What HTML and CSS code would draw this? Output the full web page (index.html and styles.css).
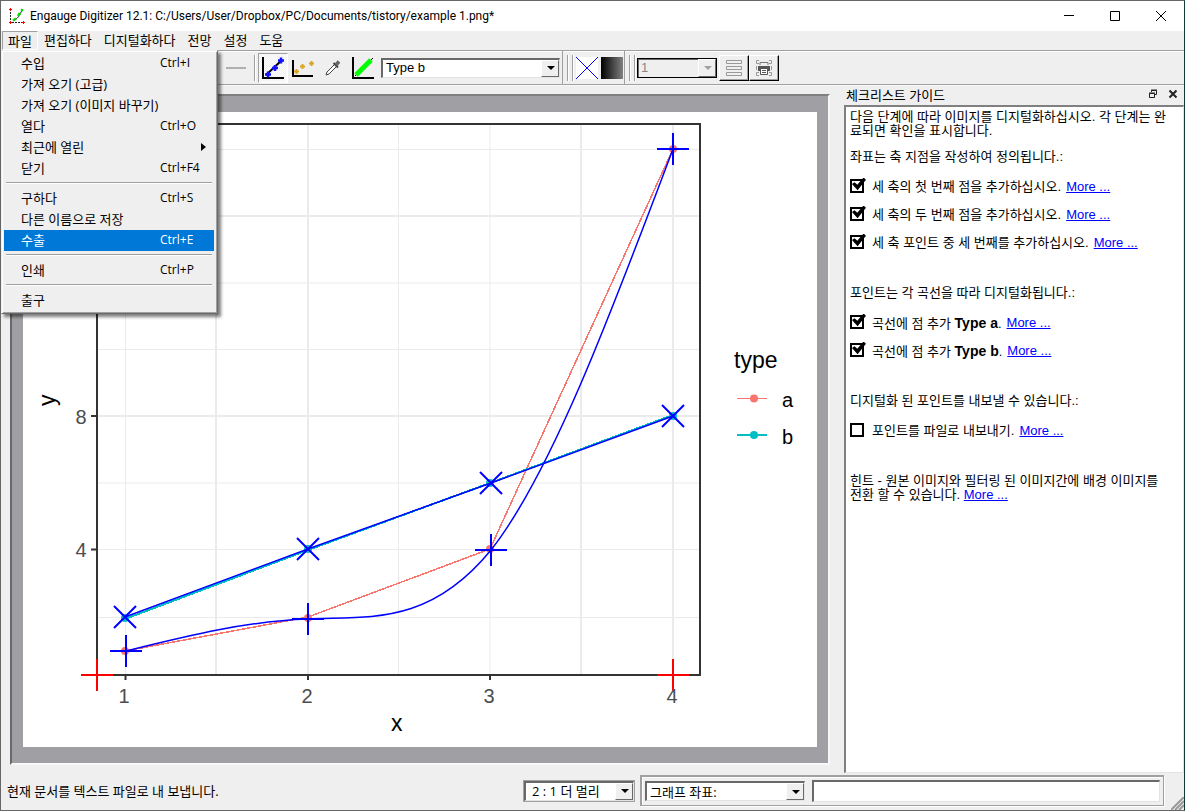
FILE: index.html
```html
<!DOCTYPE html>
<html lang="ko">
<head>
    <meta charset="UTF-8">
    <meta name="viewport" content="width=device-width, initial-scale=1.0">
    <title>Engauge Digitizer 12.1</title>
    <link rel="stylesheet" href="styles.css">
</head>
<body>
    <div class="window">
        <!-- Title bar -->
        <header class="titlebar">
            <svg class="app-icon" width="16" height="16" viewBox="0 0 16 16">
                <path d="M1.5 1v13.5H15" fill="none" stroke="#222" stroke-dasharray="2 1"/>
                <path d="M4 12.5C9 11 10 8 13.5 1.500" fill="none" stroke="#222"/>
                <path d="M4 12.500l3-2M9 8l2-3M12.500 3l1-2" fill="none" stroke="#00e000" stroke-width="2.500"/>
                <path d="M0 1.500h3M1.500 0v3M0 14.500h3M1.500 13v3M13 14.500h3M14.500 13v3" stroke="#f00"/>
            </svg>
            <h1>Engauge Digitizer 12.1: C:/Users/User/Dropbox/PC/Documents/tistory/example 1.png*</h1>
            <div class="win-buttons">
                <button type="button" aria-label="Minimize"><svg width="12" height="12"><path d="M1 5.500h10"/></svg></button>
                <button type="button" aria-label="Maximize"><svg width="12" height="12"><path d="M1.500 1.500h9v9h-9z"/></svg></button>
                <button type="button" aria-label="Close"><svg width="12" height="12"><path d="M1 1l10 10M11 1L1 11"/></svg></button>
            </div>
        </header>

        <!-- Menu bar -->
        <nav class="menubar">
            <div class="menu-root">
                <button type="button" class="menu-title open">파일</button>
                <ul class="menu">
                    <li><button type="button">수입<kbd>Ctrl+I</kbd></button></li>
                    <li><button type="button">가져 오기 (고급)</button></li>
                    <li><button type="button">가져 오기 (이미지 바꾸기)</button></li>
                    <li><button type="button">열다<kbd>Ctrl+O</kbd></button></li>
                    <li><button type="button" class="has-sub">최근에 열린</button></li>
                    <li><button type="button">닫기<kbd>Ctrl+F4</kbd></button></li>
                    <li class="sep"></li>
                    <li><button type="button">구하다<kbd>Ctrl+S</kbd></button></li>
                    <li><button type="button">다른 이름으로 저장</button></li>
                    <li><button type="button" class="active">수출<kbd>Ctrl+E</kbd></button></li>
                    <li class="sep"></li>
                    <li><button type="button">인쇄<kbd>Ctrl+P</kbd></button></li>
                    <li class="sep"></li>
                    <li><button type="button">출구</button></li>
                </ul>
            </div>
            <button type="button" class="menu-title">편집하다</button>
            <button type="button" class="menu-title">디지털화하다</button>
            <button type="button" class="menu-title">전망</button>
            <button type="button" class="menu-title">설정</button>
            <button type="button" class="menu-title">도움</button>
        </nav>

        <!-- Toolbars -->
        <div class="toolbars">
            <div class="toolbar main">
                <button type="button" class="tool" aria-label="Segment fill">
                    <svg width="24" height="24"><path d="M2 12h20" stroke="#b0b0b0" stroke-width="2"/></svg>
                </button>
                <span class="divider"></span>
                <button type="button" class="tool checked" aria-label="Curve points">
                    <svg width="24" height="24">
                        <path d="M2 1v21h21" fill="none" stroke="#000" stroke-width="2"/>
                        <path d="M5 19L21 4" stroke="#000" stroke-width="2"/>
                        <path d="M4 18.500h6M7 15.500v6M11 12h6M14 9v6M17 4.500h6M20 1.500v6" stroke="#11f" stroke-width="2.500"/>
                    </svg>
                </button>
                <button type="button" class="tool" aria-label="Point match">
                    <svg width="24" height="24">
                        <path d="M2 4v16h20" fill="none" stroke="#000" stroke-width="2"/>
                        <path d="M3 15.500h5M5.500 13v5M9 10.500h5M11.500 8v5M18 7.500h5M20.500 5v5" stroke="#daa520" stroke-width="2"/>
                    </svg>
                </button>
                <button type="button" class="tool" aria-label="Color picker">
                    <svg width="24" height="24">
                        <path d="M5 19l1-3 8-8 2 2-8 8z" fill="#fff" stroke="#444"/>
                        <path d="M12.500 7l4.500 4.500" stroke="#444" stroke-width="2"/>
                        <path d="M15 9l3-3.500" stroke="#666" stroke-width="3.500"/>
                    </svg>
                </button>
                <button type="button" class="tool" aria-label="Curve fill">
                    <svg width="24" height="24">
                        <path d="M2 1v21h21" fill="none" stroke="#000" stroke-width="2"/>
                        <path d="M4 20L22 2" stroke="#000"/>
                        <path d="M5 19L20 4" stroke="#0f0" stroke-width="5"/>
                    </svg>
                </button>
                <div class="combo curve">
                    <select aria-label="Curve"><option>Type a</option><option selected>Type b</option></select>
                </div>
            </div>
            <div class="toolbar views">
                <span class="handle"></span>
                <button type="button" class="tool small" aria-label="Background">
                    <svg width="22" height="22"><path d="M0 0h22v22H0z" fill="#fff"/><path d="M0 0l22 22M22 0L0 22" stroke="#00f"/></svg>
                </button>
                <button type="button" class="tool small gradient" aria-label="Filter"></button>
            </div>
            <div class="toolbar last">
                <span class="handle"></span>
                <div class="combo pages disabled">
                    <select aria-label="Page" disabled><option>1</option></select>
                </div>
                <button type="button" class="tool raised" aria-label="Rows">
                    <svg width="18" height="18"><path d="M1.500 1.500h15v3h-15zM1.500 7.500h15v3h-15zM1.500 13.500h15v3h-15z" fill="none" stroke="#999"/></svg>
                </button>
                <button type="button" class="tool raised" aria-label="Print rows">
                    <svg width="18" height="18">
                        <path d="M4 1.500H1.500v3H4M14 1.500h2.500v3H14M1.500 7v4M16.500 7v4M4 13.500H1.500v3H4M14 13.500h2.500v3H14" fill="none" stroke="#999"/>
                        <path d="M5 6V3.500h8V6" fill="#efefef" stroke="#777"/>
                        <path d="M3 7h12v5H3z" fill="#555"/>
                        <path d="M5.500 9.500h7v6h-7z" fill="#fff" stroke="#555"/>
                        <path d="M7 11.500h4M7 13.500h4" stroke="#555"/>
                    </svg>
                </button>
            </div>
        </div>

        <main class="workspace">
            <!-- Document with the digitized chart -->
            <section class="canvas">
                <svg class="chart" width="794" height="635" viewBox="23 112 794 635">
                    <g stroke="#ebebeb">
                        <path d="M125.500 124v551M398.500 124v551M490 124v551M97 149.500h603M97 283h603M97 349.500h603M97 483h603M97 549.500h603M97 617.500h603"/>
                        <path d="M216 124v551M308 124v551M581 124v551M673 124v551M97 216h603M97 416h603" stroke-width="2"/>
                    </g>
                    <path d="M97 124h603v551H97z" fill="none" stroke="#333" stroke-width="2"/>
                    <path d="M125.500 675v5M308 675v5M490 675v5M673 675v5M91 416h6M91 549.500h6" stroke="#333" stroke-width="2"/>

                    <g shape-rendering="crispEdges">
                        <path d="M125 651L308 617 490 549 673 149" fill="none" stroke="#f8766d" stroke-width="1.500"/>
                        <path d="M125 619L308 550 490 483 673 415" fill="none" stroke="#00bfc4" stroke-width="2"/>
                    </g>
                    <g fill="#f8766d">
                        <circle cx="125" cy="651" r="4"/><circle cx="308" cy="618" r="4"/>
                        <circle cx="490" cy="549" r="4"/><circle cx="673" cy="149" r="4"/>
                    </g>
                    <g fill="#00bfc4">
                        <circle cx="125" cy="618" r="4"/><circle cx="308" cy="549" r="4"/>
                        <circle cx="490" cy="483" r="4"/><circle cx="673" cy="416" r="4"/>
                    </g>

                    <g fill="none" stroke="#00f" stroke-width="1.500">
                        <path d="M126 651C187 636 247 621 308 619C369 616 429 626 491 550C551 474 612 311 673 149"/>
                        <path d="M125 617L308 549 491 483 673 416"/>
                    </g>
                    <g stroke="#00f" stroke-width="2">
                        <path d="M110 651h32M126 635v32M292 619h32M308 603v32M475 550h32M491 534v32M657 149h32M673 133v32"/>
                        <path d="M114 606l22 22M136 606l-22 22M297 538l22 22M319 538l-22 22M480 472l22 22M502 472l-22 22M662 405l22 22M684 405l-22 22"/>
                    </g>
                    <path d="M81 675h32M97 659v32M657 675h32M673 659v32" stroke="#f00" stroke-width="2"/>

                    <g class="ticks">
                        <text x="124" y="703">1</text>
                        <text x="307" y="703">2</text>
                        <text x="489" y="703">3</text>
                        <text x="672" y="703">4</text>
                        <text x="81" y="424">8</text>
                        <text x="81" y="557">4</text>
                    </g>
                    <g class="titles">
                        <text x="391" y="731">x</text>
                        <text transform="translate(55 406) rotate(-90)">y</text>
                        <text x="734" y="368">type</text>
                    </g>
                    <path d="M737 398.500h30" stroke="#f8766d"/>
                    <circle cx="754" cy="398.500" r="4" fill="#f8766d"/>
                    <path d="M737 435h30" stroke="#00bfc4" stroke-width="2"/>
                    <circle cx="754" cy="435" r="4" fill="#00bfc4"/>
                    <text class="legend" x="782" y="407">a</text>
                    <text class="legend" x="782" y="444">b</text>
                </svg>
            </section>

            <!-- Checklist guide -->
            <aside class="dock">
                <div class="dock-title">
                    <h2>체크리스트 가이드</h2>
                    <button type="button" aria-label="Float"><svg width="10" height="10"><path d="M3.500 3V1.500h5v4H7M3 1h6M1.500 4.500h5v4h-5zM1 4h6"/></svg></button>
                    <button type="button" aria-label="Close guide"><svg width="10" height="10"><path d="M1.500 1.500l7 7M8.500 1.500l-7 7" stroke-width="2"/></svg></button>
                </div>
                <div class="guide">
                    <p>다음 단계에 따라 이미지를 디지털화하십시오. 각 단계는 완료되면 확인을 표시합니다.</p>
                    <p>좌표는 축 지점을 작성하여 정의됩니다.:</p>
                    <ul>
                        <li><input type="checkbox" id="axis1" checked><label for="axis1">세 축의 첫 번째 점을 추가하십시오.</label><a href="#">More ...</a></li>
                        <li><input type="checkbox" id="axis2" checked><label for="axis2">세 축의 두 번째 점을 추가하십시오.</label><a href="#">More ...</a></li>
                        <li><input type="checkbox" id="axis3" checked><label for="axis3">세 축 포인트 중 세 번째를 추가하십시오.</label><a href="#">More ...</a></li>
                    </ul>
                    <p>포인트는 각 곡선을 따라 디지털화됩니다.:</p>
                    <ul>
                        <li><input type="checkbox" id="typeA" checked><label for="typeA">곡선에 점 추가 <b>Type a</b>.</label><a href="#">More ...</a></li>
                        <li><input type="checkbox" id="typeB" checked><label for="typeB">곡선에 점 추가 <b>Type b</b>.</label><a href="#">More ...</a></li>
                    </ul>
                    <p>디지털화 된 포인트를 내보낼 수 있습니다.:</p>
                    <ul>
                        <li><input type="checkbox" id="export"><label for="export">포인트를 파일로 내보내기.</label><a href="#">More ...</a></li>
                    </ul>
                    <p>힌트 - 원본 이미지와 필터링 된 이미지간에 배경 이미지를 전환 할 수 있습니다. <a href="#">More ...</a></p>
                </div>
            </aside>
        </main>

        <!-- Status bar -->
        <footer class="statusbar">
            <span class="message">현재 문서를 텍스트 파일로 내 보냅니다.</span>
            <div class="combo zoom">
                <select aria-label="Zoom"><option>2 : 1 더 멀리</option></select>
            </div>
            <div class="coords">
                <div class="combo units">
                    <select aria-label="Coordinates"><option>그래프 좌표:</option></select>
                </div>
                <input type="text" aria-label="Coordinate value">
            </div>
            <svg class="grip" width="13" height="13"><path d="M0 13L13 0M4 13l9-9M8 13l5-5" stroke="#999" stroke-width="2"/></svg>
        </footer>
    </div>
</body>
</html>
```
FILE: styles.css
```css
* {
    box-sizing: border-box;
}
body {
    margin: 0;
    font-family: "Open Sans", "Noto Sans CJK KR", sans-serif;
    font-size: 13px;
    color: #000;
}
button, select, input {
    font: inherit;
    color: inherit;
    margin: 0;
}
button {
    padding: 0;
    border: none;
    background: none;
}
ul {
    list-style: none;
    margin: 0;
    padding: 0;
}
svg {
    display: block;
}
.window {
    display: flex;
    flex-direction: column;
    height: 100vh;
    background: #efefef;
    border: 1px solid #666;
    border-right-color: #123c3c;
}

/* Title bar */
.titlebar {
    display: flex;
    align-items: center;
    height: 30px;
    padding-left: 8px;
    background: #fff;
}
.titlebar h1 {
    flex: 1;
    margin: 0 0 0 5px;
    font-family: Roboto, sans-serif;
    font-size: 12px;
    font-weight: normal;
}
.win-buttons {
    display: flex;
}
.win-buttons button {
    width: 46px;
    height: 30px;
    display: flex;
    align-items: center;
    justify-content: center;
}
.win-buttons path {
    fill: none;
    stroke: #000;
}

/* Menu bar */
.menubar {
    display: flex;
    height: 19px;
    padding-left: 1px;
}
.menu-root {
    position: relative;
}
.menu-title {
    display: block;
    height: 19px;
    padding: 0 6px;
    line-height: 19px;
    white-space: nowrap;
}
.menu-title.open {
    padding: 0 5px;
    border: 1px solid #a0a0a0;
    border-right-color: #fff;
    border-bottom-color: #fff;
    line-height: 18px;
}
.menu {
    position: absolute;
    z-index: 10;
    top: 19px;
    left: -1px;
    width: 217px;
    padding: 2px 3px 2px 2px;
    background: #efefef;
    border: 1px solid #efefef;
    border-right-color: #696969;
    border-bottom-color: #696969;
    box-shadow: inset 1px 1px #fff, inset -1px -1px #a0a0a0, 3px 3px 3px rgba(0,0,0,0.5);
}
.menu button {
    display: flex;
    align-items: center;
    width: 100%;
    height: 21px;
    padding: 0 0 2px 17px;
    text-align: left;
    white-space: nowrap;
}
.menu button.active {
    background: #0078d7;
    color: #fff;
}
.menu kbd {
    width: 54px;
    margin-left: auto;
    font-family: inherit;
    font-size: 12px;
}
.menu .has-sub::after {
    content: "";
    margin: 0 8px 0 auto;
    border: 4px solid transparent;
    border-left: 5px solid #000;
    border-right: none;
}
.menu .sep {
    height: 2px;
    margin: 3px 2px 4px;
    border-top: 1px solid #a0a0a0;
    border-bottom: 1px solid #fff;
}

/* Toolbars */
.toolbars {
    display: flex;
    flex: none;
    height: 35px;
    border-top: 1px solid #a0a0a0;
    border-bottom: 1px solid #a0a0a0;
    box-shadow: inset 0 1px #fff, 0 1px #f8f8f8;
}
.toolbar {
    display: flex;
    align-items: center;
    padding: 0 1px 0 4px;
    border-right: 1px solid #a0a0a0;
}
.toolbar.main {
    padding: 0 2px 0 220px;
}
.toolbar.last {
    border-right: none;
}
.tool {
    display: flex;
    align-items: center;
    justify-content: center;
    width: 30px;
    height: 30px;
}
.tool.checked {
    background: repeating-conic-gradient(#fff 0 25%, #efefef 0 50%) 0 0 / 2px 2px;
    border: 1px solid #a0a0a0;
    border-right-color: #fff;
    border-bottom-color: #fff;
}
.tool.small {
    width: 22px;
    height: 22px;
    margin-left: 3px;
}
.tool.gradient {
    background: linear-gradient(to right, #000, #808080);
}
.tool.raised {
    height: 26px;
    border: 1px solid #fff;
    border-right-color: #000;
    border-bottom-color: #000;
    box-shadow: inset -1px -1px #a0a0a0;
}
.divider {
    width: 2px;
    height: 26px;
    margin: 0 2px 0 3px;
    border-left: 1px solid #a0a0a0;
    border-right: 1px solid #fff;
}
.handle {
    width: 6px;
    height: 26px;
    border: 2px solid #a0a0a0;
    border-width: 0 1px;
    box-shadow: inset 1px 0 #fff, 1px 0 #fff;
}
.combo {
    position: relative;
    height: 20px;
    background: #fff;
    border: 2px solid #696969;
    border-right: 1px solid #e3e3e3;
    border-bottom: 1px solid #e3e3e3;
}
.combo select {
    display: block;
    width: 100%;
    height: 100%;
    padding: 0 20px 0 3px;
    border: none;
    background: none;
    appearance: none;
    line-height: 16px;
    opacity: 1;
}
.combo::before {
    content: "";
    position: absolute;
    top: 0;
    right: 0;
    bottom: 0;
    width: 16px;
    background: #efefef;
    border: 1px solid #fff;
    border-right-color: #696969;
    border-bottom-color: #696969;
    pointer-events: none;
}
.combo::after {
    content: "";
    position: absolute;
    top: 50%;
    right: 4px;
    margin-top: -2px;
    border: 4px solid transparent;
    border-top-color: #000;
    border-bottom: none;
    pointer-events: none;
}
.combo.curve {
    width: 179px;
    margin-left: 3px;
    font-family: "Liberation Sans", sans-serif;
}
.combo.pages {
    width: 80px;
    margin: 0 2px;
    font-family: "Liberation Sans", sans-serif;
}
.combo.disabled {
    background: #efefef;
    color: #888;
    border: 1px solid #000;
    box-shadow: inset 1px 1px #696969;
}
.combo.disabled::after {
    border-top-color: #a0a0a0;
}

/* Document */
.workspace {
    display: flex;
    flex: 1;
    min-height: 0;
}
.canvas {
    flex: 1;
    min-width: 0;
    display: flex;
    align-items: center;
    justify-content: center;
    margin: 9px 14px 8px 9px;
    background: #a0a0a4;
    border: 2px solid #696969;
    border-top-color: #808080;
    border-right-color: #f8f8f8;
    border-bottom-color: #f8f8f8;
    overflow: hidden;
}
.chart {
    flex: none;
    background: #fff;
    font-family: "Liberation Sans", sans-serif;
}
.ticks {
    font-size: 20px;
    fill: #4d4d4d;
    text-anchor: middle;
}
.titles {
    font-size: 23px;
}
.legend {
    font-size: 20px;
}

/* Checklist guide */
.dock {
    display: flex;
    flex-direction: column;
    width: 340px;
}
.dock-title {
    display: flex;
    align-items: center;
    gap: 10px;
    height: 20px;
    padding: 0 6px 2px 2px;
}
.dock-title h2 {
    flex: 1;
    margin: 0;
    font-size: 13px;
    font-weight: normal;
}
.dock-title path {
    fill: none;
    stroke: #222;
}
.guide {
    flex: 1;
    padding: 3px 12px 0 4px;
    background: #fff;
    border: 2px solid #808080;
    border-right: 1px solid #e3e3e3;
    border-bottom: 1px solid #e3e3e3;
    font-family: "Liberation Sans", "Noto Sans CJK KR", sans-serif;
    line-height: 14px;
}
.guide p {
    margin: 0 0 12px;
}
.guide ul {
    margin: -3px 0 29px;
}
.guide li {
    display: flex;
    align-items: center;
    height: 28px;
}
.guide a {
    color: #00f;
}
.guide li a {
    margin-left: 5px;
}
.guide label {
    margin-left: 8px;
}
.guide b {
    font-size: 14px;
}
.guide input {
    position: relative;
    width: 14px;
    height: 14px;
    margin-bottom: 3px;
    appearance: none;
    border: 2px solid #000;
    background: #fff;
}
.guide input:checked::after {
    content: "";
    position: absolute;
    top: -3px;
    left: 0;
    width: 14px;
    height: 13px;
    background: #000;
    clip-path: polygon(0 50%, 18% 36%, 38% 56%, 82% 0, 100% 18%, 40% 98%);
}

/* Status bar */
.statusbar {
    position: relative;
    display: flex;
    align-items: center;
    height: 37px;
    padding: 0 20px 2px 6px;
}
.message {
    flex: 1;
}
.combo.zoom {
    width: 110px;
    margin-right: 6px;
    outline: 1px solid #a0a0a0;
}
.combo.zoom select {
    padding-left: 6px;
}
.coords {
    display: flex;
    align-items: center;
    gap: 7px;
    width: 524px;
    height: 31px;
    padding: 0 3px;
    border: 2px solid #a0a0a0;
    border-right-width: 1px;
    border-bottom-width: 1px;
    box-shadow: inset 1px 1px #fff, 1px 1px #fff;
}
.combo.units {
    width: 160px;
}
.coords input {
    flex: 1;
    min-width: 0;
    height: 22px;
    background: #fff;
    border: 2px solid #696969;
    border-right: 1px solid #e3e3e3;
    border-bottom: 1px solid #e3e3e3;
}
.grip {
    position: absolute;
    right: 0;
    bottom: 0;
}
```
